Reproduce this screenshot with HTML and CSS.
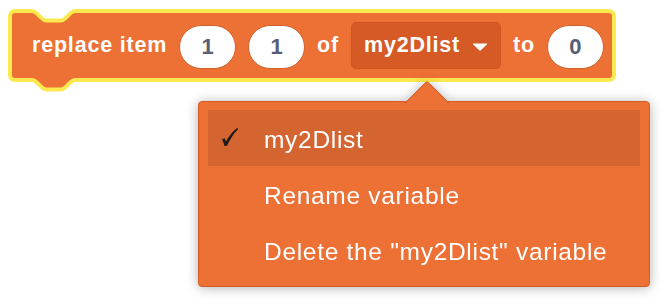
FILE: index.html
```html
<!DOCTYPE html>
<html>
<head>
<meta charset="utf-8">
<link rel="stylesheet" href="styles.css">
</head>
<body>
<div class="stage">
  <div class="block">
    <svg class="block-shape" width="608" height="85" viewBox="8 9 608 85">
      <path d="M10 16 A5 5 0 0 1 15 11 H32 C34.4 11 35.6 12.2 36.8 13.4 L41.6 18.2 C42.8 19.4 44 20.6 46.4 20.6 H60.8 C63.2 20.6 64.4 19.4 65.6 18.2 L70.4 13.4 C71.6 12.2 72.8 11 75.2 11 H609 A5 5 0 0 1 614 16 V75 A5 5 0 0 1 609 80 H75.2 C72.8 80 71.6 81.2 70.4 82.4 L65.6 87.2 C64.4 88.4 63.2 89.6 60.8 89.6 H46.4 C44 89.6 42.8 88.4 41.6 87.2 L36.8 82.4 C35.6 81.2 34.4 80 32 80 H15 A5 5 0 0 1 10 75 Z" fill="#ed7035" stroke="#fce94f" stroke-width="4" stroke-linejoin="round"/>
    </svg>
    <span class="piece label">replace item</span>
    <span class="piece oval">1</span>
    <span class="piece oval">1</span>
    <span class="piece label">of</span>
    <span class="piece dropdown">
      <span class="dd-text">my2Dlist</span>
      <svg class="dd-arrow" width="16" height="8" viewBox="0 0 16 8"><path d="M1.5 0.5 H14.5 Q15.6 0.5 14.8 1.4 L8.8 7.3 Q8 8 7.2 7.3 L1.2 1.4 Q0.4 0.5 1.5 0.5 Z" fill="#ffffff"/></svg>
    </span>
    <span class="piece label">to</span>
    <span class="piece oval">0</span>
  </div>

  <div class="menu">
    <div class="menu-arrow"></div>
    <div class="item selected">
      <span class="check"><svg width="16" height="18" viewBox="222 128 16 18"><path d="M222 139.4 L224.6 138.2 Q225.4 139.8 226 141.6 Q230.4 133.2 237.4 127.8 L238.2 129 Q231.8 135.2 227.2 145.6 L224.6 146.1 Q223.6 142.2 222 139.4 Z" fill="#1e1a18"/></svg></span>
      <span class="item-text">my2Dlist</span>
    </div>
    <div class="item">
      <span class="check"></span>
      <span class="item-text">Rename variable</span>
    </div>
    <div class="item">
      <span class="check"></span>
      <span class="item-text">Delete the "my2Dlist" variable</span>
    </div>
  </div>
</div>
</body>
</html>
```

FILE: styles.css
```css
html, body {
  margin: 0;
  padding: 0;
  background: #ffffff;
}

body {
  font-family: "Liberation Sans", Arial, Helvetica, sans-serif;
}

.stage {
  position: relative;
  width: 664px;
  height: 306px;
  box-sizing: border-box;
  padding: 9px 0 0 8px;
  overflow: hidden;
}

.block {
  position: relative;
  width: 608px;
  height: 73px;
  box-sizing: border-box;
  padding-left: 24px;
  display: flex;
  align-items: center;
  gap: 12px;
}

.block-shape {
  position: absolute;
  left: 0;
  top: 0;
  overflow: visible;
}

.piece {
  position: relative;
}

.label {
  color: #ffffff;
  font-weight: bold;
  font-size: 21.5px;
  letter-spacing: 0.8px;
  white-space: nowrap;
}

.oval {
  width: 57px;
  height: 44px;
  box-sizing: border-box;
  margin-top: 3px;
  border: 1px solid #d2602c;
  border-radius: 22px;
  background: #ffffff;
  display: flex;
  align-items: center;
  justify-content: center;
  color: #575e75;
  font-weight: bold;
  font-size: 22px;
}

.dropdown {
  height: 47px;
  box-sizing: border-box;
  padding: 0 12px 0 12px;
  border-radius: 5px;
  background: #d65a25;
  border: 1px solid #cf5621;
  display: flex;
  align-items: center;
  gap: 12px;
}

.dd-text {
  color: #ffffff;
  font-weight: bold;
  font-size: 21.5px;
  letter-spacing: 0.8px;
  white-space: nowrap;
}

.dd-arrow {
  display: block;
  margin-top: 2px;
}

.menu {
  position: absolute;
  left: 198px;
  top: 101px;
  width: 452px;
  height: 186px;
  box-sizing: border-box;
  padding: 8px 9px;
  background: #ed7035;
  border: 1px solid #d35b26;
  border-radius: 4px;
  filter: drop-shadow(0 1px 6px rgba(0, 0, 0, 0.3));
}

.menu-arrow {
  position: absolute;
  left: 212px;
  top: -15px;
  width: 32px;
  height: 32px;
  box-sizing: border-box;
  background: #ed7035;
  border-top: 1px solid #d35b26;
  border-left: 1px solid #d35b26;
  border-top-left-radius: 3px;
  transform: rotate(45deg);
  z-index: 0;
}

.item {
  position: relative;
  z-index: 1;
  height: 56px;
  box-sizing: border-box;
  padding: 4px 0 0 14px;
  display: flex;
  align-items: center;
  color: #ffffff;
  font-size: 24.5px;
  letter-spacing: 0.7px;
  white-space: nowrap;
}

.item.selected {
  background: #d46530;
}

.check {
  width: 16px;
  height: 18px;
  margin-right: 26px;
  flex: none;
  align-self: flex-start;
  margin-top: 14px;
}

.check svg {
  display: block;
}
```
